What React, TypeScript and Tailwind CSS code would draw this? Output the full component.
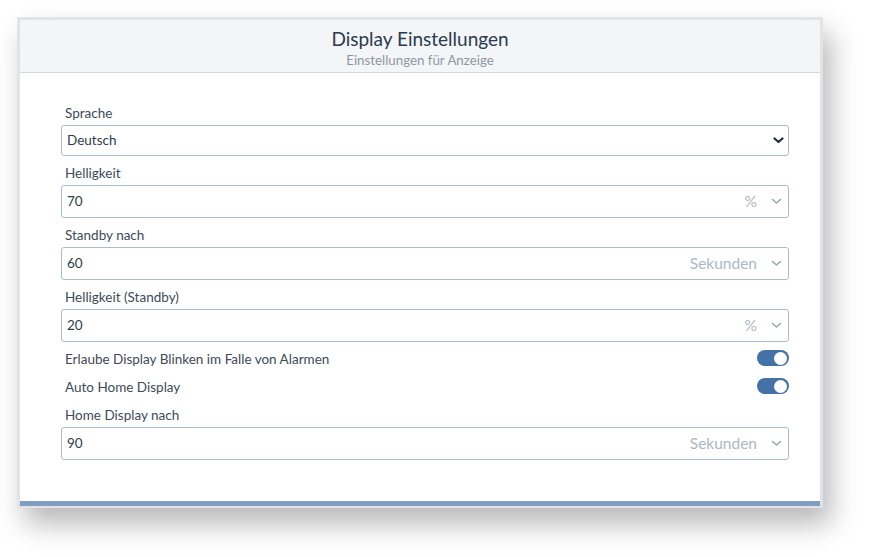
import React from "react";

const font = { fontFamily: "Lato, 'Noto Sans', sans-serif" };

function Chevron({ dark }: { dark?: boolean }) {
  return (
    <svg width="11" height="7" viewBox="0 0 11 7" className="shrink-0">
      <path
        d="M1.5 1.5 L5.5 5 L9.5 1.5"
        fill="none"
        stroke={dark ? "#1f2d3d" : "#9aa5b1"}
        strokeWidth={dark ? 2.2 : 1.6}
        strokeLinecap="round"
        strokeLinejoin="round"
      />
    </svg>
  );
}

function Label({ children }: { children: React.ReactNode }) {
  return (
    <div className="h-[20px] flex items-center pt-[2px] pl-[4px] text-[13.5px] text-[#3d4a57]">
      {children}
    </div>
  );
}

function Field({ value, unit }: { value: string; unit: string }) {
  return (
    <div className="h-[33px] mt-[3px] border border-[#a9bcd6] rounded-[3px] flex items-center pl-[5px] pr-[6px] text-[13.5px] text-[#2f3d4c]">
      <span className="flex-1">{value}</span>
      <span className="text-[15.5px] text-[#aeb7c2] mr-[14px]">{unit}</span>
      <Chevron />
    </div>
  );
}

function Toggle() {
  return (
    <div className="w-[32px] h-[16px] rounded-full bg-[#4472a6] flex items-center justify-end pr-[2px]">
      <div className="w-[13px] h-[13px] rounded-full bg-white" />
    </div>
  );
}

function ToggleRow({ label }: { label: string }) {
  return (
    <div className="h-[20px] flex items-center justify-between pl-[4px] text-[13.5px] text-[#3d4a57]">
      <span className="pt-[2px]">{label}</span>
      <Toggle />
    </div>
  );
}

export default function App() {
  return (
    <div className="w-[871px] h-[557px] bg-white pt-[17px] pl-[17px]" style={font}>
      <div className="w-[806px] bg-[#e1e3e6] p-[3px] pb-[2px] shadow-[8px_16px_26px_rgba(0,0,0,0.28)]">
        <div className="bg-white rounded-t-[2px] overflow-hidden">
          <div className="h-[53px] bg-[#f4f5f7] border-b border-[#d5d9de] flex flex-col items-center pt-[6px]">
            <div className="text-[19px] leading-[26px] text-[#2a3b4f]">Display Einstellungen</div>
            <div className="text-[13.3px] leading-[16px] text-[#8d98a5]">Einstellungen für Anzeige</div>
          </div>
          <div className="pl-[41px] pr-[31px] pt-[29px] pb-[41px]">
            <Label>Sprache</Label>
            <div className="h-[31px] mt-[3px] border border-[#a9bcd6] rounded-[3px] flex items-center pl-[5px] pr-[4px] text-[13.5px] text-[#2f3d4c]">
              <span className="flex-1">Deutsch</span>
              <Chevron dark />
            </div>
            <div className="mt-[6px]">
              <Label>Helligkeit</Label>
              <Field value="70" unit="%" />
            </div>
            <div className="mt-[6px]">
              <Label>Standby nach</Label>
              <Field value="60" unit="Sekunden" />
            </div>
            <div className="mt-[6px]">
              <Label>Helligkeit (Standby)</Label>
              <Field value="20" unit="%" />
            </div>
            <div className="mt-[6px]">
              <ToggleRow label="Erlaube Display Blinken im Falle von Alarmen" />
            </div>
            <div className="mt-[8px]">
              <ToggleRow label="Auto Home Display" />
            </div>
            <div className="mt-[8px]">
              <Label>Home Display nach</Label>
              <Field value="90" unit="Sekunden" />
            </div>
          </div>
          <div className="h-[5px] bg-[#7f9dc5]" />
        </div>
      </div>
    </div>
  );
}
